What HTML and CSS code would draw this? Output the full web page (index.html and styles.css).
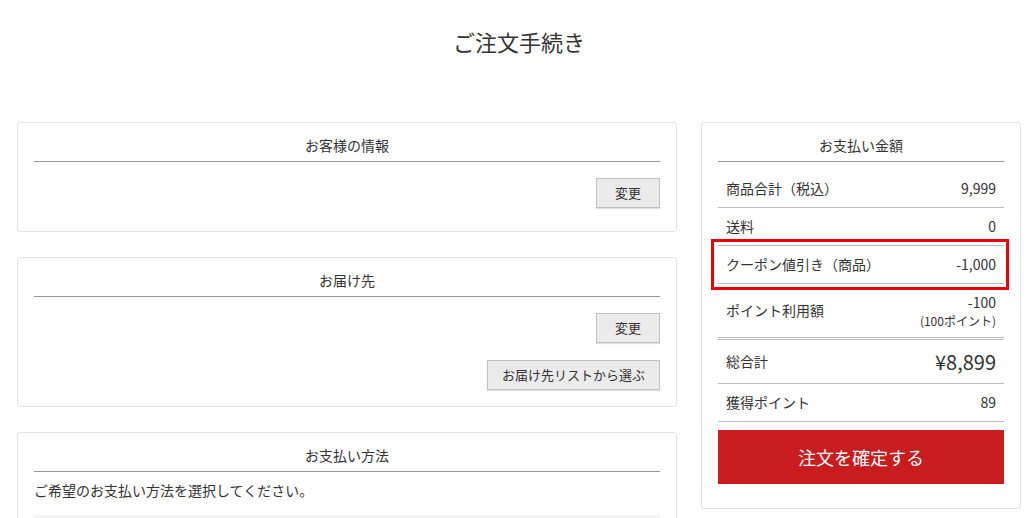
FILE: index.html
```html
<!DOCTYPE html>
<html lang="ja">
<head>
<meta charset="utf-8">
<title>ご注文手続き</title>
<link rel="stylesheet" href="styles.css">
</head>
<body>
<div class="page">
  <h1 class="page-title">ご注文手続き</h1>
  <div class="layout">
    <div class="main">
      <section class="card">
        <h2 class="card-title">お客様の情報</h2>
        <div class="card-body card-body--tall">
          <div class="actions">
            <button class="btn btn--small">変更</button>
          </div>
        </div>
      </section>
      <section class="card">
        <h2 class="card-title">お届け先</h2>
        <div class="card-body">
          <div class="actions">
            <button class="btn btn--small">変更</button>
            <button class="btn">お届け先リストから選ぶ</button>
          </div>
        </div>
      </section>
      <section class="card">
        <h2 class="card-title">お支払い方法</h2>
        <div class="card-body card-body--payment">
          <p class="note">ご希望のお支払い方法を選択してください。</p>
          <div class="method-box"></div>
        </div>
      </section>
    </div>
    <aside class="summary">
      <h2 class="card-title">お支払い金額</h2>
      <div class="rows">
        <div class="row row--bordered">
          <span class="label">商品合計（税込）</span>
          <span class="value">9,999</span>
        </div>
        <div class="row">
          <span class="label">送料</span>
          <span class="value">0</span>
        </div>
        <div class="row row--coupon">
          <span class="label">クーポン値引き（商品）</span>
          <span class="value">-1,000</span>
        </div>
        <div class="row row--double">
          <span class="label">ポイント利用額</span>
          <span class="value value--stack">-100<small class="sub">(100ポイント)</small></span>
        </div>
        <div class="row row--bordered row--total">
          <span class="label">総合計</span>
          <span class="value value--total">¥8,899</span>
        </div>
        <div class="row row--bordered">
          <span class="label">獲得ポイント</span>
          <span class="value">89</span>
        </div>
      </div>
      <button class="confirm">注文を確定する</button>
    </aside>
  </div>
</div>
</body>
</html>
```

FILE: styles.css
```css
* {
  box-sizing: border-box;
}

html, body {
  margin: 0;
  padding: 0;
  background: #ffffff;
}

body {
  font-family: "Noto Sans CJK JP", "Noto Sans", sans-serif;
  color: #333333;
  font-size: 14px;
  line-height: 20px;
}

.page {
  padding: 0 8px 0 17px;
}

.page-title {
  margin: 0;
  padding: 26px 0 0;
  height: 122px;
  text-align: center;
  font-size: 22px;
  line-height: 30px;
  font-weight: normal;
  color: #333333;
}

.layout {
  display: grid;
  grid-template-columns: 660px 320px;
  column-gap: 24px;
  align-items: start;
}

.main {
  display: flex;
  flex-direction: column;
  gap: 25px;
}

.card,
.summary {
  background: #ffffff;
  border: 1px solid #e3e3e3;
  border-radius: 3px;
  padding: 0 16px;
}

.card-title {
  margin: 0;
  padding: 12px 0 6px;
  border-bottom: 1px solid #999999;
  text-align: center;
  font-size: 14px;
  line-height: 20px;
  font-weight: normal;
  color: #333333;
}

.card-body {
  padding: 16px 0 16px;
}

.card-body--tall {
  padding-bottom: 23px;
}

.actions {
  display: flex;
  flex-direction: column;
  align-items: flex-end;
  gap: 17px;
}

.btn {
  height: 30px;
  padding: 0 14px;
  min-width: 64px;
  background: #ebebeb;
  border: 1px solid #c2c2c2;
  border-radius: 0;
  box-shadow: 0 1px 1px rgba(0, 0, 0, 0.12);
  font-family: inherit;
  font-size: 13px;
  color: #333333;
  line-height: 28px;
}

.btn--small {
  padding: 0 8px;
}

.card-body--payment {
  padding: 8px 0 0;
}

.note {
  margin: 0;
  font-size: 14px;
  line-height: 20px;
}

.method-box {
  margin-top: 15px;
  height: 12px;
  background: #f4f4f4;
}

.summary {
  padding-bottom: 24px;
}

.rows {
  margin-top: 8px;
}

.row {
  display: flex;
  justify-content: space-between;
  align-items: center;
  padding: 8px 8px;
  font-size: 14px;
  line-height: 21px;
}

.row--bordered {
  border-bottom: 1px solid #bbbbbb;
}

.row--coupon {
  position: relative;
  border-top: 1px solid #bbbbbb;
  border-bottom: 1px solid #bbbbbb;
}

.row--coupon::after {
  content: "";
  position: absolute;
  top: -7px;
  bottom: -7px;
  left: -7px;
  right: -5px;
  border: 3px solid #ee0000;
  pointer-events: none;
}

.row--double {
  border-bottom: 3px double #bbbbbb;
}

.value {
  text-align: right;
}

.value--stack {
  display: flex;
  flex-direction: column;
  align-items: flex-end;
}

.sub {
  font-size: 12px;
  line-height: 16px;
}

.row--total {
  line-height: 27px;
}

.value--total {
  font-size: 20px;
}

.confirm {
  display: block;
  width: 100%;
  height: 54px;
  margin-top: 8px;
  border: none;
  background: #c91c1f;
  color: #ffffff;
  font-family: inherit;
  font-size: 18px;
  cursor: pointer;
}
```
